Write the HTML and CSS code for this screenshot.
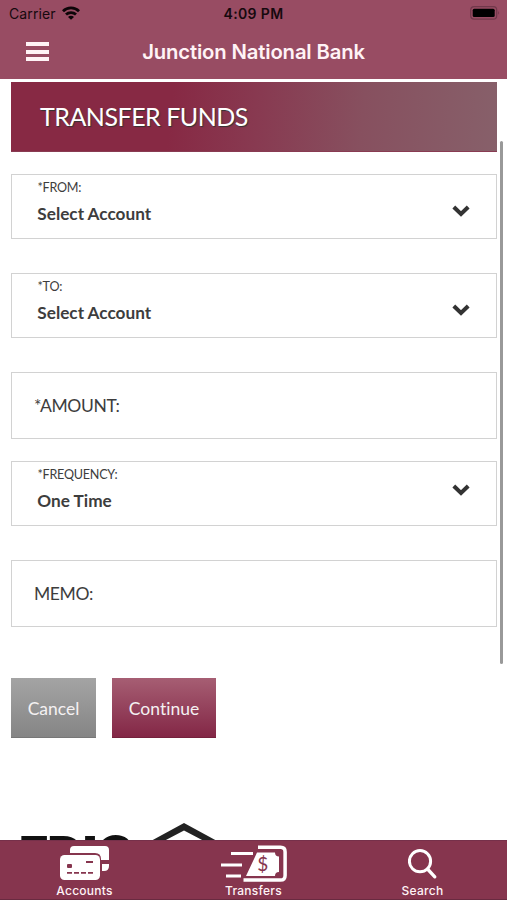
FILE: index.html
```html
<!DOCTYPE html>
<html lang="en">
<head>
<meta charset="utf-8">
<title>Transfer Funds</title>
<link rel="stylesheet" href="styles.css">
</head>
<body>
<div class="app">
  <header class="header">
    <div class="status">
      <div class="carrier"><span>Carrier</span>
        <svg class="wifi" width="18" height="14" viewBox="0 0 18 14"><g fill="none" stroke="#0d0508" stroke-width="2.8"><path d="M1 5.2a11.4 11.4 0 0 1 16 0"/><path d="M4 8.6a7.2 7.2 0 0 1 10 0"/></g><path d="M6 10.9a4.2 4.2 0 0 1 6 0L9 13.8z" fill="#0d0508"/></svg>
      </div>
      <div class="time">4:09 PM</div>
      <svg class="battery" width="31" height="14" viewBox="0 0 31 14"><rect x=".7" y=".7" width="26" height="12.4" rx="3.4" fill="none" stroke="#71384b" stroke-width="1.2"/><rect x="2.7" y="2.7" width="22" height="8.4" rx="1.5" fill="#000"/><path d="M28.2 4.8q1.8 2 0 4z" fill="#71384b"/></svg>
    </div>
    <div class="nav">
      <div class="menu"><i></i><i></i><i></i></div>
      <h1 class="bank">Junction National Bank</h1>
      <div></div>
    </div>
  </header>
  <main class="content">
    <h2 class="banner"><span>TRANSFER FUNDS</span></h2>
    <div class="field select from"><div><div class="label">*FROM:</div><div class="value">Select Account</div></div><svg class="chevron" width="18" height="12" viewBox="0 0 18 12"><path d="M1.8 2 9 9l7.2-7"/></svg></div>
    <div class="field select to"><div><div class="label">*TO:</div><div class="value">Select Account</div></div><svg class="chevron" width="18" height="12" viewBox="0 0 18 12"><path d="M1.8 2 9 9l7.2-7"/></svg></div>
    <div class="field input amount"><span>*AMOUNT:</span></div>
    <div class="field select frequency"><div><div class="label">*FREQUENCY:</div><div class="value">One Time</div></div><svg class="chevron" width="18" height="12" viewBox="0 0 18 12"><path d="M1.8 2 9 9l7.2-7"/></svg></div>
    <div class="field input memo"><span>MEMO:</span></div>
    <div class="actions"><button class="btn cancel">Cancel</button><button class="btn continue">Continue</button></div>
    <div class="logos"><span class="fdic">FDIC</span><svg class="lender" width="68" height="46" viewBox="0 0 68 46"><path d="M0 18.5 34 0l34 18.5V28h-7v18H7V28H0zM14 18v20h40V18L34 7.5z" fill="#222" fill-rule="evenodd"/></svg></div>
  </main>
  <div class="scrollbar"></div>
  <nav class="tabs">
    <div class="tab"><div class="icon">
      <svg width="50" height="36" viewBox="0 0 50 36"><path d="M10 6V5Q10 1 14 1h31q4 0 4 4v10h-8v-1q0-6-6-6H10zM42 19h7v2q0 5-5 5h-2z" fill="#fff"/><rect y="10" width="40" height="25" rx="4.5" fill="#fff"/><g fill="#86354e"><rect x="7" y="19" width="5" height="4" rx="1"/><rect x="26" y="16" width="7" height="2"/><path d="M7 27h5v1.8H7zm7 0h5v1.8h-5zm7 0h5v1.8h-5zm7 0h5v1.8h-5z"/></g></svg></div><span>Accounts</span></div>
    <div class="tab"><div class="icon transfer">
      <svg width="68" height="38" viewBox="0 0 68 38"><path d="M11 8.5h22M1 20h21M6 31h15" fill="none" stroke="#fff" stroke-width="3.2"/><path d="M38 2.3H60.5q4.6 0 4.6 4.6v23.6q0 4.6-4.6 4.6H23.5" fill="none" stroke="#fff" stroke-width="3.5"/><path d="M37 7.5h18q0 4 4 4v15.5q-4 0-4 4H26z" fill="#fff"/><text x="43" y="25.5" text-anchor="middle" class="dollar">$</text></svg></div><span>Transfers</span></div>
    <div class="tab"><div class="icon search">
      <svg width="30" height="31" viewBox="0 0 30 31"><g fill="none" stroke="#fff"><circle cx="12" cy="12.2" r="10.6" stroke-width="3"/><path d="m19.5 20 7.3 7.8" stroke-width="3.3" stroke-linecap="round"/></g></svg></div><span>Search</span></div>
  </nav>
</div>
</body>
</html>
```
FILE: styles.css
```css
* { box-sizing: border-box; }
body { margin: 0; background: #fff; font-family: Lato, sans-serif; }
.app { height: 900px; display: flex; flex-direction: column; overflow: hidden; position: relative; }
.header { flex: none; height: 79px; background: #984c63; font-family: Inter, sans-serif; }
.status { height: 27px; display: grid; grid-template-columns: 1fr auto 1fr; align-items: center; padding: 0 6px 0 9px; color: #16090e; }
.carrier { display: flex; align-items: center; gap: 6px; font-size: 14px; letter-spacing: .1px; }
.carrier, .time { line-height: 18px; }
.wifi { margin-top: -2px; }
.time { font-size: 14px; font-weight: 600; letter-spacing: .35px; margin-right: 3px; }
.battery { justify-self: end; margin-top: -1px; }
.nav { height: 50px; display: grid; grid-template-columns: 1fr auto 1fr; align-items: center; padding: 0 26px; }
.menu { width: 23px; display: grid; gap: 3.6px; margin-top: -1px; }
.menu i { display: block; height: 4px; background: #fff3f6; }
.bank { margin: 0; font-size: 20.3px; line-height: 26px; font-weight: 600; color: #fff3f6; letter-spacing: -.15px; }
.content { flex: 1; min-height: 0; padding: 3px 10px 0 11px; overflow: hidden; display: flex; flex-direction: column; color: #3d3d3d; }
.content > * { flex: none; }
.banner { margin: 0; height: 70px; padding: 0 0 1px 29px; display: flex; align-items: center; font-size: 25px; font-weight: 400; letter-spacing: -.5px; color: #fff; background: linear-gradient(96deg, #872944 0%, #872944 33%, #883a51 51%, #87505f 72%, #87606a 100%); border-bottom: 1px solid #893b52; text-shadow: 1px 1px 1px #333; }
.field { border: 1px solid #d2d2d2; display: flex; align-items: center; }
.select { height: 65px; padding: 4px 26px 10px 26px; align-items: flex-start; justify-content: space-between; }
.label { font-size: 12.6px; line-height: 17px; letter-spacing: -.25px; margin-left: -.5px; }
.value { font-size: 17.2px; line-height: 22px; font-weight: 700; margin: 7px 0 0 -.7px; }
.chevron { margin-top: 25.5px; fill: none; stroke: #333; stroke-width: 4; }
.input { height: 67px; padding: 0 0 1px 22px; font-size: 17.5px; letter-spacing: -.4px; }
.from { margin-top: 22px; }
.to, .amount, .memo { margin-top: 34px; }
.frequency { margin-top: 22px; }
.frequency .chevron { margin-top: 17.5px; }
.actions { margin-top: 51px; display: flex; gap: 16px; height: 60px; }
.btn { border: 0; padding: 2px 0 0; width: 85px; font: 17.5px Lato, sans-serif; font-variant-ligatures: none; color: #f4f1f2; }
.cancel { background: linear-gradient(#a4a4a4, #858585); border-bottom: 1px solid #777; }
.continue { width: 104px; background: linear-gradient(#a65e73, #832746); border-bottom: 1px solid #74213c; }
.logos { margin-top: 85px; display: flex; gap: 17px; padding-left: 8px; }
.fdic { width: 114px; font: 900 50px/50px Inter, sans-serif; color: #111; margin-top: 6px; letter-spacing: -.8px; }
.scrollbar { position: absolute; top: 141px; left: 500px; width: 3px; height: 523px; border-radius: 2px; background: #999; }
.tabs { flex: none; height: 60px; display: grid; grid-template-columns: repeat(3, 169px); background: #86354e; font-family: Inter, sans-serif; border-top: 1px solid #76304a; border-bottom: 1px solid #692a40; }
.tab { display: flex; flex-direction: column; align-items: center; color: #fff3f6; font-size: 12px; line-height: 16px; font-weight: 500; letter-spacing: .25px; }
.icon { height: 42px; padding-top: 4px; }
.icon svg { display: block; }
.search { padding-top: 8px; }
.dollar { font: 19px Lato, sans-serif; fill: #86354e; }
```
